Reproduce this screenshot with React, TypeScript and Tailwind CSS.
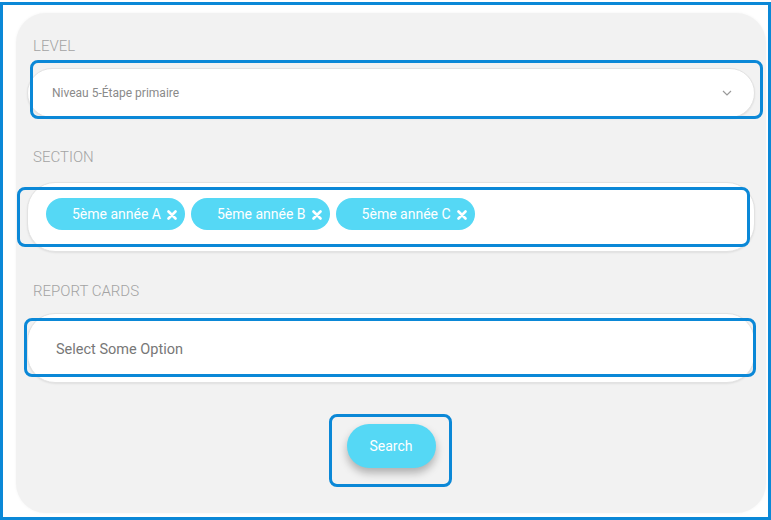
import React from "react";

const tags = ["5ème année A", "5ème année B", "5ème année C"];

function Label({ children, className = "" }: { children: React.ReactNode; className?: string }) {
  return (
    <div className={`pl-[6px] text-[15px] leading-[18px] font-light text-[#a3a3a3] ${className}`}>
      {children}
    </div>
  );
}

function Tag({ text }: { text: string }) {
  return (
    <span className="flex h-8 items-center gap-[6px] rounded-full bg-[#55d8f5] pl-[26px] pr-[8px] text-[14px] text-white">
      {text}
      <svg width="10" height="10" viewBox="0 0 10 10" className="mt-[1px]">
        <path d="M1.5 1.5 L8.5 8.5 M8.5 1.5 L1.5 8.5" stroke="white" strokeWidth="2.6" strokeLinecap="round" />
      </svg>
    </span>
  );
}

export default function App() {
  return (
    <div className="h-[520px] w-[771px] bg-white pt-[2px] font-['Roboto',sans-serif]">
      <div className="h-[518px] w-full border-[3px] border-[#0b88d7] bg-white pl-[13px] pr-[2px] pt-[8px] pb-[3px]">
        <div className="flex h-[500px] w-[750px] flex-col rounded-[30px] bg-[#f2f2f2] px-[11px] pt-[24px] shadow-[0_0_3px_rgba(0,0,0,0.05)]">
          <Label>LEVEL</Label>

          <div className="relative mt-[13px]">
            <div className="flex h-[50px] items-center justify-between rounded-full border border-[#e2e2e2] bg-white pl-[24px] pr-[22px] shadow-[0_1px_2px_rgba(0,0,0,0.08)]">
              <span className="text-[12px] text-[#8a8a8a]">Niveau 5-Étape primaire</span>
              <svg width="10" height="6" viewBox="0 0 10 6">
                <path d="M1 1 L5 5 L9 1" fill="none" stroke="#9a9a9a" strokeWidth="1.2" />
              </svg>
            </div>
            <div className="absolute -top-[8px] -right-[8px] -bottom-[1px] left-[3px] rounded-[8px] border-[3px] border-[#0b88d7]" />
          </div>

          <Label className="mt-[30px]">SECTION</Label>

          <div className="relative mt-[16px]">
            <div className="flex h-[70px] items-start gap-[6px] rounded-[28px] border border-[#e2e2e2] bg-white pl-[18px] pt-[15px] shadow-[0_1px_2px_rgba(0,0,0,0.08)]">
              {tags.map((t) => (
                <Tag key={t} text={t} />
              ))}
            </div>
            <div className="absolute top-[5px] right-[5px] bottom-[5px] -left-[10px] rounded-[8px] border-[3px] border-[#0b88d7]" />
          </div>

          <Label className="mt-[30px]">REPORT CARDS</Label>

          <div className="relative mt-[13px]">
            <div className="flex h-[70px] items-center rounded-[28px] border border-[#e2e2e2] bg-white pl-[28px] pt-[4px] shadow-[0_1px_2px_rgba(0,0,0,0.08)]">
              <span className="text-[14.5px] text-[#777]">Select Some Option</span>
            </div>
            <div className="absolute top-[5px] -right-[1px] bottom-[6px] -left-[3px] rounded-[8px] border-[3px] border-[#0b88d7]" />
          </div>

          <div className="mt-[41px] flex justify-center">
            <div className="relative">
              <button className="h-[44px] w-[89px] rounded-full bg-[#55d8f5] text-[14px] text-white shadow-[0_5px_8px_rgba(0,0,0,0.28)]">
                Search
              </button>
              <div className="absolute -top-[10px] -right-[16px] -bottom-[19px] -left-[18px] rounded-[8px] border-[3px] border-[#0b88d7]" />
            </div>
          </div>
        </div>
      </div>
    </div>
  );
}
